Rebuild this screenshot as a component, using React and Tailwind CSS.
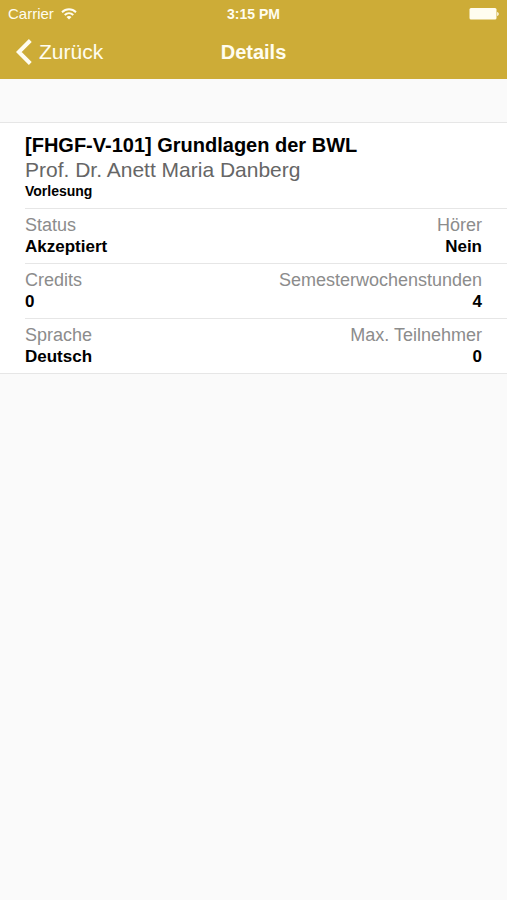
const rows = [
  [{ label: 'Status', value: 'Akzeptiert' }, { label: 'Hörer', value: 'Nein' }],
  [{ label: 'Credits', value: '0' }, { label: 'Semesterwochenstunden', value: '4' }],
  [{ label: 'Sprache', value: 'Deutsch' }, { label: 'Max. Teilnehmer', value: '0' }],
]

function WifiIcon() {
  return (
    <svg width="16" height="12" viewBox="0 0 16 12" fill="none" stroke="currentColor" strokeWidth="1.9" aria-hidden="true">
      <path d="M1 4.2C5 0.3 11 0.3 15 4.2" />
      <path d="M3.7 7C6.2 4.6 9.8 4.6 12.3 7" />
      <path d="M8 11.4L5.5 8.9C6.9 7.6 9.1 7.6 10.5 8.9Z" fill="currentColor" stroke="none" />
    </svg>
  )
}

function BatteryIcon() {
  return (
    <svg width="30" height="12" viewBox="0 0 30 12" fill="currentColor" aria-hidden="true">
      <rect x="0.5" y="0" width="27" height="11.5" rx="1.5" />
      <path d="M28.2 4C30.2 4.4 30.2 7.6 28.2 8Z" />
    </svg>
  )
}

function StatusBar() {
  return (
    <div className="grid grid-cols-3 items-center h-7 px-2 text-sm">
      <div className="flex items-center gap-[7px] text-[15px]">
        <span>Carrier</span>
        <WifiIcon />
      </div>
      <span className="text-center font-bold">3:15 PM</span>
      <div className="flex justify-end">
        <BatteryIcon />
      </div>
    </div>
  )
}

function NavBar() {
  return (
    <nav className="grid grid-cols-3 items-center h-[51px] px-4 pb-[3px]">
      <button type="button" className="flex items-center gap-[7px] text-[21px] leading-6">
        <svg width="16" height="26" viewBox="0 0 16 26" fill="none" stroke="currentColor" strokeWidth="4" aria-hidden="true">
          <path d="M14.3 1.5L2.8 13L14.3 24.5" />
        </svg>
        Zurück
      </button>
      <h1 className="text-center text-xl font-bold">Details</h1>
    </nav>
  )
}

export default function App() {
  return (
    <div className="min-h-screen bg-[#fafafa] font-['Liberation_Sans',Arial,sans-serif] text-black">
      <header className="bg-[#cdac37] text-[#fffdf0]">
        <StatusBar />
        <NavBar />
      </header>

      <main className="mt-[43px] bg-white border-y border-[#e6e6e6]">
        <section className="ml-[25px] pt-[9px] pb-2">
          <h2 className="text-xl leading-[26px] font-bold">[FHGF-V-101] Grundlagen der BWL</h2>
          <p className="text-[21px] leading-6 text-[#666666]">Prof. Dr. Anett Maria Danberg</p>
          <p className="text-sm leading-[18px] font-bold">Vorlesung</p>
        </section>

        {/* Course facts, two per row */}
        {rows.map(([left, right]) => (
          <dl key={left.label} className="flex justify-between ml-[25px] pr-[25px] py-[6px] border-t border-[#e6e6e6] text-[17px] leading-[21px]">
            <div>
              <dt className="text-lg leading-[21px] text-[#8c8c8c]">{left.label}</dt>
              <dd className="font-bold">{left.value}</dd>
            </div>
            <div className="text-right">
              <dt className="text-lg leading-[21px] text-[#8c8c8c]">{right.label}</dt>
              <dd className="font-bold">{right.value}</dd>
            </div>
          </dl>
        ))}
      </main>
    </div>
  )
}
